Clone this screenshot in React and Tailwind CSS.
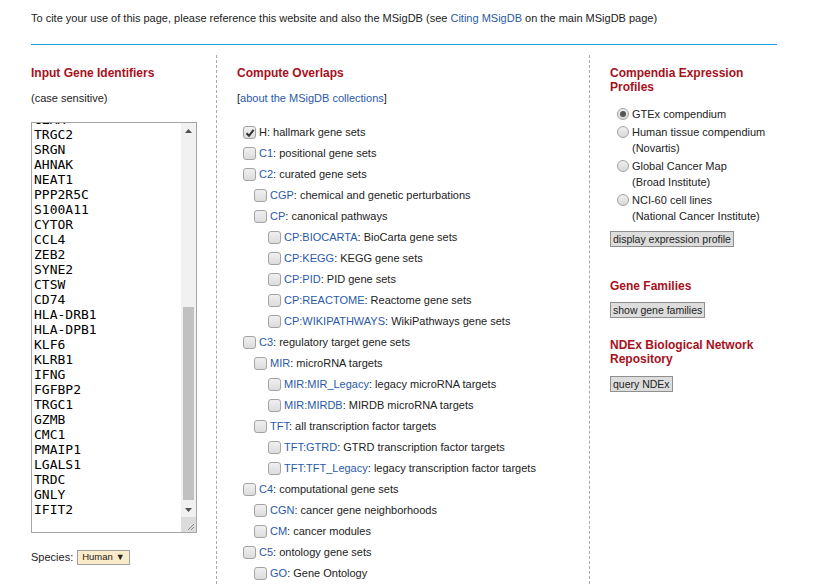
import React from 'react'

const genes = [
  'GZMA', 'TRGC2', 'SRGN', 'AHNAK', 'NEAT1', 'PPP2R5C', 'S100A11', 'CYTOR', 'CCL4', 'ZEB2', 'SYNE2',
  'CTSW', 'CD74', 'HLA-DRB1', 'HLA-DPB1', 'KLF6', 'KLRB1', 'IFNG', 'FGFBP2', 'TRGC1', 'GZMB',
  'CMC1', 'PMAIP1', 'LGALS1', 'TRDC', 'GNLY', 'IFIT2',
]

const sets = [
  { lvl: 0, code: 'H', desc: 'hallmark gene sets', checked: true, plain: true },
  { lvl: 0, code: 'C1', desc: 'positional gene sets' },
  { lvl: 0, code: 'C2', desc: 'curated gene sets' },
  { lvl: 1, code: 'CGP', desc: 'chemical and genetic perturbations' },
  { lvl: 1, code: 'CP', desc: 'canonical pathways' },
  { lvl: 2, code: 'CP:BIOCARTA', desc: 'BioCarta gene sets' },
  { lvl: 2, code: 'CP:KEGG', desc: 'KEGG gene sets' },
  { lvl: 2, code: 'CP:PID', desc: 'PID gene sets' },
  { lvl: 2, code: 'CP:REACTOME', desc: 'Reactome gene sets' },
  { lvl: 2, code: 'CP:WIKIPATHWAYS', desc: 'WikiPathways gene sets' },
  { lvl: 0, code: 'C3', desc: 'regulatory target gene sets' },
  { lvl: 1, code: 'MIR', desc: 'microRNA targets' },
  { lvl: 2, code: 'MIR:MIR_Legacy', desc: 'legacy microRNA targets' },
  { lvl: 2, code: 'MIR:MIRDB', desc: 'MIRDB microRNA targets' },
  { lvl: 1, code: 'TFT', desc: 'all transcription factor targets' },
  { lvl: 2, code: 'TFT:GTRD', desc: 'GTRD transcription factor targets' },
  { lvl: 2, code: 'TFT:TFT_Legacy', desc: 'legacy transcription factor targets' },
  { lvl: 0, code: 'C4', desc: 'computational gene sets' },
  { lvl: 1, code: 'CGN', desc: 'cancer gene neighborhoods' },
  { lvl: 1, code: 'CM', desc: 'cancer modules' },
  { lvl: 0, code: 'C5', desc: 'ontology gene sets' },
  { lvl: 1, code: 'GO', desc: 'Gene Ontology' },
]

const indent = ['pl-[6px]', 'pl-[17px]', 'pl-[31px]']

const compendia = [
  { label: 'GTEx compendium', selected: true },
  { label: 'Human tissue compendium', sub: '(Novartis)' },
  { label: 'Global Cancer Map', sub: '(Broad Institute)' },
  { label: 'NCI-60 cell lines', sub: '(National Cancer Institute)' },
]

function Checkbox({ checked }) {
  return (
    <span className="flex h-[13px] w-[13px] shrink-0 items-center justify-center rounded-[3px] border border-[#a3a3a3] bg-gradient-to-b from-[#f0f0f0] to-[#dcdcdc]">
      {checked && (
        <svg width="10" height="10" viewBox="0 0 10 10">
          <path d="M1.5 5.2 L4 7.8 L8.6 1.8" fill="none" stroke="#333" strokeWidth="2" />
        </svg>
      )}
    </span>
  )
}

function Radio({ selected }) {
  return (
    <span className="mt-[2px] flex h-[12px] w-[12px] shrink-0 items-center justify-center rounded-full border border-[#a3a3a3] bg-gradient-to-b from-[#f0f0f0] to-[#d8d8d8]">
      {selected && <span className="h-[6px] w-[6px] rounded-full bg-[#555]" />}
    </span>
  )
}

function Heading({ children }) {
  return <h2 className="text-[12px] font-bold leading-[14px] text-[#a8101c]">{children}</h2>
}

function Button({ children }) {
  return (
    <button className="h-[16px] border border-[#8f8f8f] bg-[#dddddd] px-[2px] text-[10.5px] leading-[14px] text-[#222]">
      {children}
    </button>
  )
}

export default function App() {
  return (
    <div className="h-[584px] overflow-hidden bg-white px-[31px] font-['Liberation_Sans',Arial,sans-serif] text-[11px] text-[#222]">
      <p className="pt-[12px] leading-[13px]">
        To cite your use of this page, please reference this website and also the MSigDB (see{' '}
        <a className="text-[#2a5aa8]">Citing MSigDB</a> on the main MSigDB page)
      </p>
      <div className="mt-[19px] h-px w-[746px] bg-[#1a9fd9]" />

      <div className="mt-[10px] flex">
        {/* left: gene list */}
        <div className="w-[186px] border-r border-dashed border-[#aaa] pt-[11px]">
          <Heading>Input Gene Identifiers</Heading>
          <p className="mt-[12px] leading-[13px]">(case sensitive)</p>
          <div className="mt-[17px] flex h-[411px] w-[166px] border border-[#a5a5a5]">
            <div className="flex-1 overflow-hidden pl-[2px]">
              <div className="mt-[-11px] font-['DejaVu_Sans_Mono',monospace] text-[13px] leading-[15px] text-black">
                {genes.map((g) => (
                  <div key={g}>{g}</div>
                ))}
              </div>
            </div>
            <div className="flex w-[15px] flex-col bg-[#f1f1f1]">
              <div className="flex h-[15px] items-center justify-center">
                <svg width="7" height="4" viewBox="0 0 7 4">
                  <path d="M0 4 L3.5 0 L7 4 Z" fill="#505050" />
                </svg>
              </div>
              <div className="flex flex-1 flex-col justify-end px-[2px] pb-[2px]">
                <div className="h-[193px] bg-[#c1c1c1]" />
              </div>
              <div className="flex h-[15px] items-center justify-center">
                <svg width="7" height="4" viewBox="0 0 7 4">
                  <path d="M0 0 L3.5 4 L7 0 Z" fill="#505050" />
                </svg>
              </div>
              <div className="flex h-[15px] items-end justify-end bg-[#dcdcdc] p-[2px]">
                <svg width="7" height="7" viewBox="0 0 7 7">
                  <path d="M7 1 L1 7 M7 4 L4 7" stroke="#888" strokeWidth="1" />
                </svg>
              </div>
            </div>
          </div>
          <div className="mt-[17px] flex items-center">
            <span className="leading-[13px]">Species:</span>
            <span className="ml-[4px] flex h-[15px] items-center border border-[#a0a0a0] bg-[#fcebc9] px-[4px] text-[9.5px] text-[#222]">
              Human <span className="ml-[3px] text-[9px]">▼</span>
            </span>
          </div>
        </div>

        {/* middle: overlaps */}
        <div className="w-[373px] border-r border-dashed border-[#aaa] pl-[20px] pt-[11px]">
          <Heading>Compute Overlaps</Heading>
          <p className="mt-[12px] leading-[13px]">
            [<a className="text-[#2a5aa8]">about the MSigDB collections</a>]
          </p>
          <div className="mt-[17px]">
            {sets.map((s) => (
              <div key={s.code} className={`flex h-[21px] items-center gap-[3px] ${indent[s.lvl]}`}>
                <Checkbox checked={s.checked} />
                <span className="leading-[13px]">
                  <span className={s.plain ? 'text-[#222]' : 'text-[#2a5aa8]'}>{s.code}</span>: {s.desc}
                </span>
              </div>
            ))}
          </div>
        </div>

        {/* right: tools */}
        <div className="w-[187px] pl-[20px] pt-[11px]">
          <Heading>
            Compendia Expression
            <br />
            Profiles
          </Heading>
          <div className="mt-[12px] pl-[7px]">
            {compendia.map((c) => (
              <div key={c.label} className="mb-[2px] flex gap-[3px]">
                <Radio selected={c.selected} />
                <div className="leading-[16px]">
                  <div>{c.label}</div>
                  {c.sub && <div>{c.sub}</div>}
                </div>
              </div>
            ))}
          </div>
          <div className="mt-[7px]">
            <Button>display expression profile</Button>
          </div>

          <div className="mt-[31px]">
            <Heading>Gene Families</Heading>
          </div>
          <div className="mt-[9px]">
            <Button>show gene families</Button>
          </div>

          <div className="mt-[20px]">
            <Heading>
              NDEx Biological Network
              <br />
              Repository
            </Heading>
          </div>
          <div className="mt-[10px]">
            <Button>query NDEx</Button>
          </div>
        </div>
      </div>
    </div>
  )
}
